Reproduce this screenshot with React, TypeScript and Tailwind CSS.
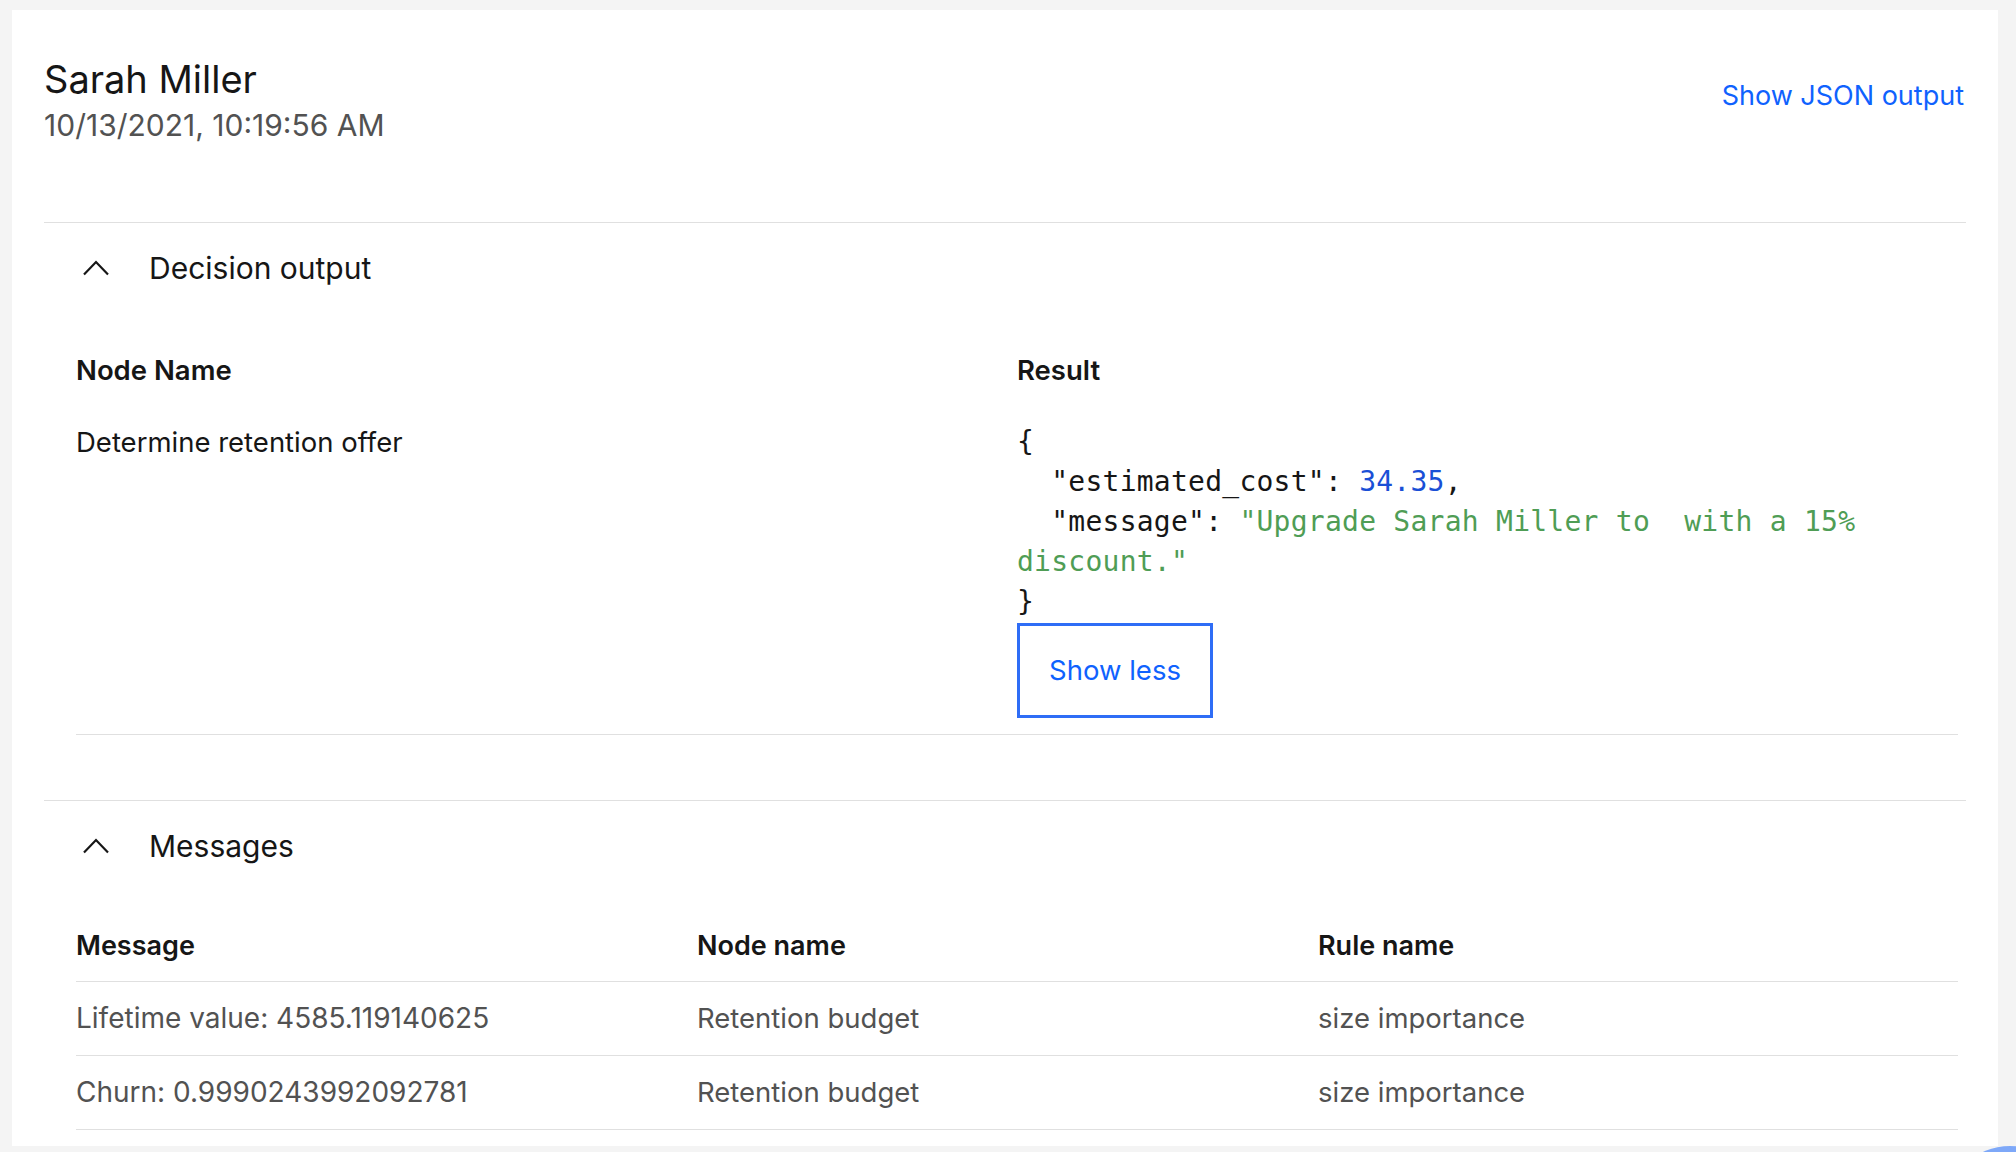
import React from "react";

const messages = [
  { message: "Lifetime value: 4585.119140625", node: "Retention budget", rule: "size importance" },
  { message: "Churn: 0.9990243992092781", node: "Retention budget", rule: "size importance" },
];

function ChevronUp() {
  return (
    <svg viewBox="0 0 32 32" className="w-8 h-8 shrink-0" fill="none">
      <polyline points="4,22.5 16,10 28,22.5" stroke="#161616" strokeWidth="2.2" strokeLinejoin="miter" />
    </svg>
  );
}

function AccordionHeader({ title }: { title: string }) {
  return (
    <div className="flex items-center h-[90px] pl-[36px]">
      <ChevronUp />
      <span className="ml-[37px] text-[30px] leading-[40px] text-[#161616]">{title}</span>
    </div>
  );
}

export default function App() {
  return (
    <div className="h-[1152px] overflow-hidden bg-[#f4f4f4] pt-[10px] pl-[12px] pr-[18px] [font-family:Inter,sans-serif]">
      <div className="h-[1136px] overflow-hidden bg-white px-8">
        {/* Header */}
        <div className="flex justify-between items-start pt-[45px] pb-[79px]">
          <div>
            <h1 className="text-[38px] leading-[48px] text-[#161616]">Sarah Miller</h1>
            <div className="mt-[4px] text-[30px] leading-[36px] text-[#525252]">10/13/2021, 10:19:56 AM</div>
          </div>
          <a className="mt-[23px] mr-[2px] text-[27px] leading-[36px] text-[#0f62fe] cursor-pointer">Show JSON output</a>
        </div>

        {/* Decision output */}
        <section className="border-t border-[#e0e0e0]">
          <AccordionHeader title="Decision output" />
          <div className="pl-[32px] pr-[8px] pt-[37px] pb-[65px]">
            <div className="grid grid-cols-2 text-[27.5px] leading-[40px] font-semibold text-[#161616]">
              <div>Node Name</div>
              <div>Result</div>
            </div>
            <div className="grid grid-cols-2 mt-[32px] pb-4 border-b border-[#e0e0e0]">
              <div className="text-[27.5px] leading-[40px] text-[#161616]">Determine retention offer</div>
              <div>
                <div className="[font-family:'DejaVu_Sans_Mono',monospace] text-[28px] tracking-[0.25px] leading-[40px] text-[#161616] whitespace-pre">
                  <div>{"{"}</div>
                  <div>
                    {'  "estimated_cost": '}
                    <span className="text-[#1a4fd6]">34.35</span>
                    {","}
                  </div>
                  <div>
                    {'  "message": '}
                    <span className="text-[#4f9d55]">{'"Upgrade Sarah Miller to  with a 15%'}</span>
                  </div>
                  <div className="text-[#4f9d55]">{'discount."'}</div>
                  <div>{"}"}</div>
                </div>
                <button className="mt-[1px] h-[95px] w-[196px] border-[3px] border-[#2f6df6] text-[27.5px] text-[#0f62fe] cursor-pointer">
                  Show less
                </button>
              </div>
            </div>
          </div>
        </section>

        {/* Messages */}
        <section className="border-t border-[#e0e0e0]">
          <AccordionHeader title="Messages" />
          <div className="pl-[32px] pr-[8px] pt-[35px]">
            <div className="grid grid-cols-[621px_621px_1fr] text-[27px] leading-[40px] font-semibold text-[#161616] pb-[15px] border-b border-[#e0e0e0]">
              <div>Message</div>
              <div>Node name</div>
              <div>Rule name</div>
            </div>
            {messages.map((m, i) => (
              <div
                key={i}
                className="grid grid-cols-[621px_621px_1fr] text-[27.5px] leading-[40px] text-[#525252] pt-4 pb-[17px] border-b border-[#e0e0e0]"
              >
                <div className="text-[28px]">{m.message}</div>
                <div>{m.node}</div>
                <div>{m.rule}</div>
              </div>
            ))}
          </div>
        </section>
      </div>
      <div className="fixed left-[1946px] top-[1146px] w-32 h-32 rounded-full bg-[#7ea8f8]" />
    </div>
  );
}
